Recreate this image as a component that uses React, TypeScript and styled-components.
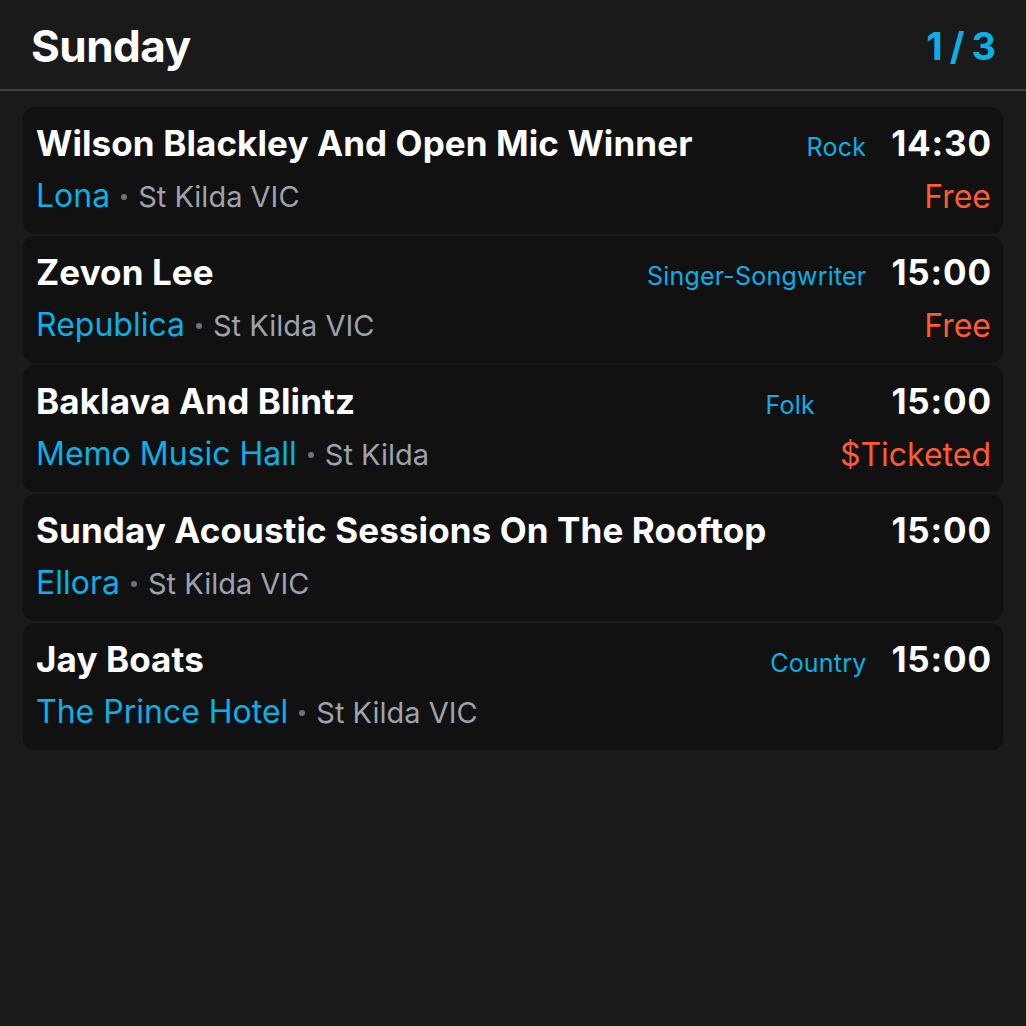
import React from "react";
import styled, { createGlobalStyle } from "styled-components";

const GlobalStyle = createGlobalStyle`
  html, body {
    margin: 0;
    padding: 0;
    background: #1a1a1a;
  }
  body {
    font-family: Inter, "Noto Sans", "DejaVu Sans", sans-serif;
    -webkit-font-smoothing: antialiased;
  }
`;

const Screen = styled.div`
  width: 1026px;
  height: 1026px;
  background: #1a1a1a;
  display: flex;
  flex-direction: column;
`;

const Header = styled.header`
  height: 91px;
  box-sizing: border-box;
  display: flex;
  align-items: center;
  justify-content: space-between;
  padding: 2px 31px 0 31px;
  border-bottom: 2px solid #3a3f4a;
`;

const DayTitle = styled.h1`
  margin: 0;
  font-size: 44px;
  font-weight: 700;
  color: #ffffff;
  letter-spacing: -0.5px;
`;

const Pager = styled.span`
  font-size: 38px;
  font-weight: 700;
  color: #0ab0e6;
  letter-spacing: -1px;
`;

const List = styled.div`
  display: flex;
  flex-direction: column;
  gap: 2px;
  padding: 16px 23px;
`;

const Card = styled.div`
  background: #111111;
  border-radius: 12px;
  padding: 11px 12px 12px 13px;
  display: grid;
  grid-template-columns: 1fr auto auto;
  grid-template-rows: 50px 54px;
  column-gap: 25px;
  align-items: center;
`;

const Title = styled.div`
  font-size: 35px;
  font-weight: 700;
  color: #ffffff;
  white-space: nowrap;
  letter-spacing: 0.1px;
`;

const Genre = styled.div`
  font-size: 25px;
  color: #0ab0e6;
  padding-top: 8px;
  letter-spacing: 0.2px;
`;

const RightCol = styled.div`
  grid-column: 3;
  grid-row: 1 / span 2;
  display: grid;
  grid-template-rows: 50px 54px;
  align-items: center;
  justify-items: end;
`;

const Time = styled.div`
  font-size: 35px;
  font-weight: 700;
  color: #ffffff;
  letter-spacing: 0.8px;
  margin-right: -0.8px;
`;

const Price = styled.div`
  font-size: 32px;
  color: #ff5a36;
  padding-top: 2px;
`;

const VenueLine = styled.div`
  grid-column: 1 / span 2;
  grid-row: 2;
  display: flex;
  align-items: center;
  gap: 11px;
  white-space: nowrap;
`;

const Venue = styled.span`
  font-size: 32px;
  color: #0ab0e6;
`;

const Dot = styled.span`
  width: 6px;
  height: 6px;
  border-radius: 50%;
  background: #6b7280;
  margin-top: 3px;
`;

const Location = styled.span`
  font-size: 29px;
  color: #9ca3af;
  padding-top: 2px;
`;

type Gig = {
  title: string;
  genre?: string;
  time: string;
  venue: string;
  location: string;
  price?: string;
};

const gigs: Gig[] = [
  { title: "Wilson Blackley And Open Mic Winner", genre: "Rock", time: "14:30", venue: "Lona", location: "St Kilda VIC", price: "Free" },
  { title: "Zevon Lee", genre: "Singer-Songwriter", time: "15:00", venue: "Republica", location: "St Kilda VIC", price: "Free" },
  { title: "Baklava And Blintz", genre: "Folk", time: "15:00", venue: "Memo Music Hall", location: "St Kilda", price: "$Ticketed" },
  { title: "Sunday Acoustic Sessions On The Rooftop", time: "15:00", venue: "Ellora", location: "St Kilda VIC" },
  { title: "Jay Boats", genre: "Country", time: "15:00", venue: "The Prince Hotel", location: "St Kilda VIC" },
];

export default function App() {
  return (
    <Screen>
      <GlobalStyle />
      <Header>
        <DayTitle>Sunday</DayTitle>
        <Pager>1 / 3</Pager>
      </Header>
      <List>
        {gigs.map((g) => (
          <Card key={g.title}>
            <Title>{g.title}</Title>
            <Genre>{g.genre ?? ""}</Genre>
            <RightCol>
              <Time>{g.time}</Time>
              <Price>{g.price ?? ""}</Price>
            </RightCol>
            <VenueLine>
              <Venue>{g.venue}</Venue>
              <Dot />
              <Location>{g.location}</Location>
            </VenueLine>
          </Card>
        ))}
      </List>
    </Screen>
  );
}
